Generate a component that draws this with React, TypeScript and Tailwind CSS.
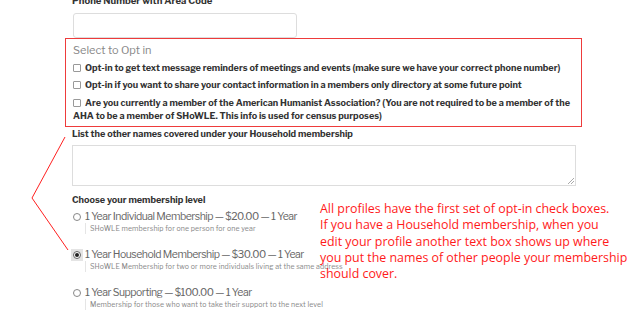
import React from 'react'

const franklin = { fontFamily: '"Libre Franklin", Lato, "Noto Sans", sans-serif' }

const optIns = [
  'Opt-in to get text message reminders of meetings and events (make sure we have your correct phone number)',
  'Opt-in if you want to share your contact information in a members only directory at some future point',
]

const levels = [
  {
    label: '1 Year Individual Membership — $20.00 — 1 Year',
    desc: 'SHoWLE membership for one person for one year',
    checked: false,
  },
  {
    label: '1 Year Household Membership — $30.00 — 1 Year',
    desc: 'SHoWLE Membership for two or more individuals living at the same address',
    checked: true,
  },
  {
    label: '1 Year Supporting — $100.00 — 1 Year',
    desc: 'Membership for those who want to take their support to the next level',
    checked: false,
  },
]

const Box = () => (
  <span className="inline-block w-[8px] h-[8px] border border-[#999] rounded-[1px] bg-white shrink-0 mr-[4px] align-[-1px]" />
)

const Radio = ({ checked }: { checked: boolean }) =>
  checked ? (
    <span className="w-[12px] h-[12px] bg-[#e4e4e4] flex items-center justify-center shrink-0 -ml-[2px] mr-[2px]">
      <span className="w-[8px] h-[8px] rounded-full border border-[#666] bg-white flex items-center justify-center">
        <span className="w-[4px] h-[4px] rounded-full bg-[#222]" />
      </span>
    </span>
  ) : (
    <span className="w-[8px] h-[8px] rounded-full border border-[#888] bg-white shrink-0 mr-[4px]" />
  )

export default function App() {
  return (
    <div className="relative w-[640px] h-[320px] overflow-hidden bg-white" style={franklin}>
      <div className="flex flex-col pl-[72px] -mt-[5px]">
        <div className="text-[9.5px] leading-[12px] font-bold text-[#333]">Phone Number with Area Code</div>
        <div className="mt-[6px] ml-[1px] w-[224px] h-[25px] border border-[#ddd] rounded-[3px]" />

        <div className="-ml-[7px] w-[517px] h-[89px] border border-[#ee3b3b] pl-[7px] pt-[4px] flex flex-col">
          <div className="text-[11px] leading-[14px] text-[#888]">Select to Opt in</div>
          {optIns.map((t) => (
            <div key={t} className="flex items-center mt-[4px] text-[9.1px] leading-[13px] font-bold text-[#333] whitespace-nowrap">
              <Box />
              <span>{t}</span>
            </div>
          ))}
          <div className="mt-[5px] text-[9.1px] leading-[13px] font-bold text-[#333] whitespace-nowrap">
            <Box />
            Are you currently a member of the American Humanist Association? (You are not required to be a member of the
            <br />
            AHA to be a member of SHoWLE. This info is used for census purposes)
          </div>
        </div>

        <div className="text-[9.1px] leading-[13px] font-bold text-[#333]">
          List the other names covered under your Household membership
        </div>
        <div className="relative mt-[5px] w-[504px] h-[41px] border border-[#ddd]">
          <svg className="absolute right-[1px] bottom-[1px]" width="6" height="6" viewBox="0 0 6 6">
            <path d="M6 0L0 6M6 3L3 6" stroke="#aaa" strokeWidth="1" />
          </svg>
        </div>

        <div className="mt-[7px] text-[9.1px] leading-[13px] font-bold text-[#333]">Choose your membership level</div>

        <div className="flex flex-col mt-[4px]">
          {levels.map((l, i) => (
            <div key={l.label} className={i > 0 ? 'mt-[14px]' : ''}>
              <div className="flex items-center pl-[1px] text-[10.5px] leading-[13px] tracking-[-0.5px] text-[#666] whitespace-nowrap">
                <Radio checked={l.checked} />
                <span>{l.label}</span>
              </div>
              <div className="ml-[13px] border-l border-[#e5e5e5] pl-[4px] text-[7px] leading-[11px] tracking-[0.1px] text-[#888] whitespace-nowrap">
                {l.desc}
              </div>
            </div>
          ))}
        </div>
      </div>

      <svg className="absolute left-0 top-0 pointer-events-none" width="640" height="320">
        <polyline points="65,137 32,198 68,250" fill="none" stroke="#ff2020" strokeWidth="1" />
      </svg>

      <div
        className="absolute left-[320px] top-[201px] text-[12.4px] leading-[16.25px] text-[#ff1a1a] whitespace-nowrap"
        style={{ fontFamily: '"Open Sans", sans-serif' }}
      >
        <p>All profiles have the first set of opt-in check boxes.</p>
        <p>If you have a Household membership, when you</p>
        <p>edit your profile another text box shows up where</p>
        <p>you put the names of other people your membership</p>
        <p>should cover.</p>
      </div>
    </div>
  )
}
